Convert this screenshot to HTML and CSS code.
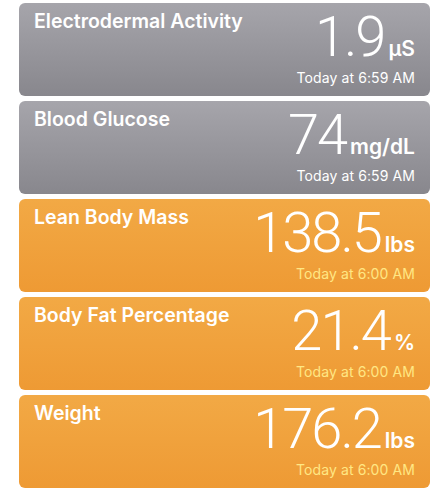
FILE: index.html
```html
<!DOCTYPE html>
<html lang="en">
<head>
    <meta charset="UTF-8">
    <meta name="viewport" content="width=device-width, initial-scale=1.0">
    <title>Health Data</title>
    <link rel="stylesheet" href="styles.css">
</head>
<body>

    <div class="card-list">

        <!-- Grey cards -->
        <div class="card grey">
            <div class="card-title">Electrodermal Activity</div>
            <div class="card-value">
                <div class="reading"><span class="number">1.9</span><span class="unit">µS</span></div>
                <div class="date">Today at 6:59 AM</div>
            </div>
        </div>

        <div class="card grey">
            <div class="card-title">Blood Glucose</div>
            <div class="card-value">
                <div class="reading"><span class="number">74</span><span class="unit">mg/dL</span></div>
                <div class="date">Today at 6:59 AM</div>
            </div>
        </div>

        <!-- Orange cards -->
        <div class="card orange">
            <div class="card-title">Lean Body Mass</div>
            <div class="card-value">
                <div class="reading"><span class="number">138.5</span><span class="unit">lbs</span></div>
                <div class="date">Today at 6:00 AM</div>
            </div>
        </div>

        <div class="card orange">
            <div class="card-title">Body Fat Percentage</div>
            <div class="card-value">
                <div class="reading"><span class="number">21.4</span><span class="unit">%</span></div>
                <div class="date">Today at 6:00 AM</div>
            </div>
        </div>

        <div class="card orange">
            <div class="card-title">Weight</div>
            <div class="card-value">
                <div class="reading"><span class="number">176.2</span><span class="unit">lbs</span></div>
                <div class="date">Today at 6:00 AM</div>
            </div>
        </div>

    </div>

</body>
</html>
```

FILE: styles.css
```css
* {
    box-sizing: border-box;
    margin: 0;
    padding: 0;
}
body {
    font-family: Inter, "Noto Sans", sans-serif;
    background-color: #ffffff;
    color: white;
}
.card-list {
    display: flex;
    flex-direction: column;
    gap: 5px;
    padding: 3px 18px 0 19px;
}
.card {
    height: 93px;
    border-radius: 6px;
    display: flex;
    justify-content: space-between;
    padding: 6px 15px 0 15px;
}
.card.grey {
    background: linear-gradient(to bottom, #a6a5ab, #88878d);
}
.card.orange {
    background: linear-gradient(to bottom, #f2a945, #ee9a34);
}
.card-title {
    font-size: 19.5px;
    font-weight: 600;
    line-height: 24px;
}
.card-value {
    display: flex;
    flex-direction: column;
    align-items: flex-end;
}
.reading {
    display: flex;
    align-items: baseline;
    margin-top: 6px;
}
.number {
    font-family: Roboto, sans-serif;
    font-size: 56px;
    font-weight: 300;
    line-height: 44px;
    letter-spacing: -2px;
}
.unit {
    font-size: 21px;
    font-weight: 600;
    line-height: 21px;
    margin-left: 4px;
}
.date {
    font-size: 14px;
    line-height: 18px;
    margin-top: 10px;
    letter-spacing: 0.1px;
}
.orange .date {
    color: #ffe784;
}
```
